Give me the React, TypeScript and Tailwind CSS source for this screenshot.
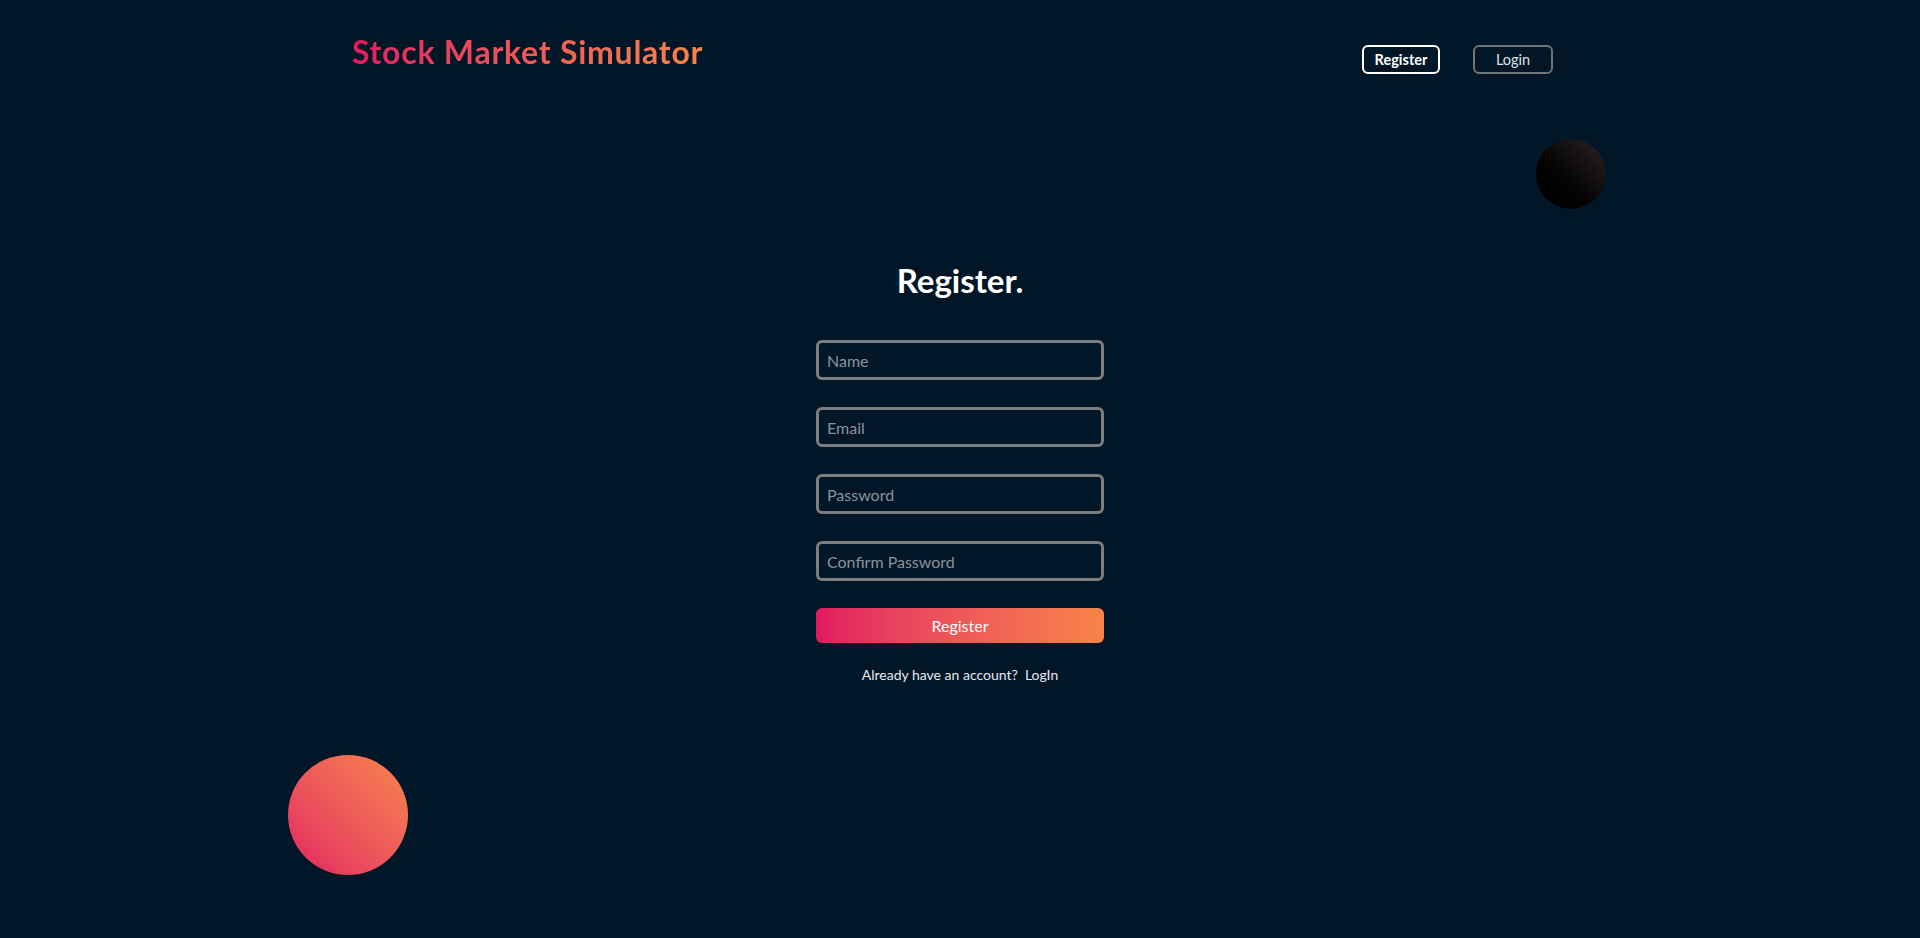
const fields = ['Name', 'Email', 'Password', 'Confirm Password'];

const App = () => {
  return (
    <div className="relative min-h-[938px] w-full overflow-hidden bg-[#011627] font-['Lato',sans-serif] text-white">
      {/* Header */}
      <nav className="flex items-start justify-between pl-[352px] pr-[367px] pt-[32px]">
        <h1 className="bg-gradient-to-r from-[#e1185f] to-[#f88349] bg-clip-text text-[32px] font-bold leading-[40px] tracking-[0.75px] text-transparent">
          Stock Market Simulator
        </h1>
        <div className="mt-[13px] flex items-center gap-[33px]">
          <button className="h-[29px] w-[78px] rounded-[6px] border-2 border-white text-[14.5px] font-bold text-white">
            Register
          </button>
          <button className="h-[29px] w-[80px] rounded-[6px] border-2 border-[#6f7479] text-[14.5px] text-[#dfe3e8]">
            Login
          </button>
        </div>
      </nav>

      {/* Decorative circles */}
      <div className="absolute left-[1536px] top-[139px] h-[70px] w-[70px] rounded-full bg-gradient-to-tr from-[#000000] to-[#2c2627]" />
      <div className="absolute left-[288px] top-[755px] h-[120px] w-[120px] rounded-full bg-gradient-to-tr from-[#e21b60] to-[#f7844c]" />

      {/* Form */}
      <div className="mx-auto mt-[186px] flex w-[288px] flex-col items-center">
        <h2 className="text-[33px] font-bold leading-[40px]">Register.</h2>
        <form className="mt-[40px] flex w-full flex-col gap-[27px]">
          {fields.map((f) => (
            <input
              key={f}
              placeholder={f}
              type={f.includes('Password') ? 'password' : 'text'}
              className="h-[40px] w-full rounded-[6px] border-[3px] border-[#7b7d80] bg-transparent px-[8px] text-[16px] text-white outline-none placeholder:text-[#8a939b]"
            />
          ))}
          <button
            type="button"
            className="h-[35px] w-full rounded-[6px] bg-gradient-to-r from-[#e1185f] to-[#f88349] text-[16px] text-white"
          >
            Register
          </button>
        </form>
        <p className="mt-[21px] text-[14px] text-[#e6eaef]">
          Already have an account?&nbsp; LogIn
        </p>
      </div>
    </div>
  );
};

export default App;
